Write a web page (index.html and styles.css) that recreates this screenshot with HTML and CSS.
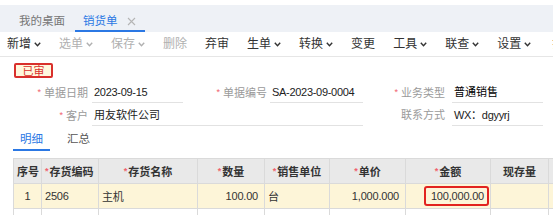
FILE: index.html
```html
<!DOCTYPE html>
<html lang="zh-CN">
<head>
<meta charset="utf-8">
<title>销货单</title>
<link rel="stylesheet" href="styles.css">
</head>
<body>
<div class="page">
  <div class="tabbar">
    <div class="tab">我的桌面</div>
    <div class="tab active">销货单<svg class="close" width="9" height="9" viewBox="0 0 9 9"><path d="M1 1L8 8M8 1L1 8" stroke="#b5b5b5" stroke-width="1.1" fill="none"/></svg></div>
  </div>
  <div class="toolbar">
    <span class="tb">新增<svg class="chev" width="7" height="5" viewBox="0 0 7 5"><polyline points="0.8,0.8 3.5,3.8 6.2,0.8" fill="none" stroke="currentColor" stroke-width="1.4"/></svg></span>
    <span class="tb off">选单<svg class="chev" width="7" height="5" viewBox="0 0 7 5"><polyline points="0.8,0.8 3.5,3.8 6.2,0.8" fill="none" stroke="currentColor" stroke-width="1.4"/></svg></span>
    <span class="tb off">保存<svg class="chev" width="7" height="5" viewBox="0 0 7 5"><polyline points="0.8,0.8 3.5,3.8 6.2,0.8" fill="none" stroke="currentColor" stroke-width="1.4"/></svg></span>
    <span class="tb off">删除</span>
    <span class="sep"></span>
    <span class="tb">弃审</span>
    <span class="sep"></span>
    <span class="tb">生单<svg class="chev" width="7" height="5" viewBox="0 0 7 5"><polyline points="0.8,0.8 3.5,3.8 6.2,0.8" fill="none" stroke="currentColor" stroke-width="1.4"/></svg></span>
    <span class="tb">转换<svg class="chev" width="7" height="5" viewBox="0 0 7 5"><polyline points="0.8,0.8 3.5,3.8 6.2,0.8" fill="none" stroke="currentColor" stroke-width="1.4"/></svg></span>
    <span class="sep"></span>
    <span class="tb">变更</span>
    <span class="sep"></span>
    <span class="tb">工具<svg class="chev" width="7" height="5" viewBox="0 0 7 5"><polyline points="0.8,0.8 3.5,3.8 6.2,0.8" fill="none" stroke="currentColor" stroke-width="1.4"/></svg></span>
    <span class="tb">联查<svg class="chev" width="7" height="5" viewBox="0 0 7 5"><polyline points="0.8,0.8 3.5,3.8 6.2,0.8" fill="none" stroke="currentColor" stroke-width="1.4"/></svg></span>
    <span class="tb">设置<svg class="chev" width="7" height="5" viewBox="0 0 7 5"><polyline points="0.8,0.8 3.5,3.8 6.2,0.8" fill="none" stroke="currentColor" stroke-width="1.4"/></svg></span>
    <span class="sep wide"></span>
    <span class="tb">打印</span>
  </div>

  <div class="status"><span class="badge">已审</span></div>

  <div class="form">
    <div class="lab lab1"><i class="req">*</i>单据日期</div>
    <div class="val num">2023-09-15</div>
    <div class="lab lab2"><i class="req">*</i>单据编号</div>
    <div class="val num">SA-2023-09-0004</div>
    <div class="lab lab3"><i class="req">*</i>业务类型</div>
    <div class="val strong">普通销售</div>

    <div class="lab lab1"><i class="req">*</i>客户</div>
    <div class="val span3">用友软件公司</div>
    <div class="lab lab3">联系方式</div>
    <div class="val num">WX：dgyyrj</div>
  </div>

  <div class="subtabs">
    <div class="stab active">明细</div>
    <div class="stab">汇总</div>
  </div>

  <table class="grid">
    <colgroup>
      <col class="w-seq"><col class="w-code"><col class="w-name"><col class="w-qty"><col class="w-unit"><col class="w-price"><col class="w-amt"><col class="w-stock"><col class="w-more">
    </colgroup>
    <thead>
      <tr>
        <th class="left">序号</th>
        <th class="left"><i class="req">*</i>存货编码</th>
        <th><i class="req">*</i>存货名称</th>
        <th><i class="req">*</i>数量</th>
        <th><i class="req">*</i>销售单位</th>
        <th><i class="req">*</i>单价</th>
        <th><i class="req">*</i>金额</th>
        <th>现存量</th>
        <th></th>
      </tr>
    </thead>
    <tbody>
      <tr class="sel">
        <td class="c">1</td>
        <td>2506</td>
        <td>主机</td>
        <td class="r">100.00</td>
        <td>台</td>
        <td class="r">1,000.000</td>
        <td class="r amt"><span class="mark">100,000.00</span></td>
        <td></td>
        <td></td>
      </tr>
      <tr>
        <td class="c faint">2</td>
        <td></td><td></td><td></td><td></td><td></td><td></td><td></td><td></td>
      </tr>
    </tbody>
  </table>
</div>
</body>
</html>
```

FILE: styles.css
```css
* { box-sizing: border-box; }
html, body { margin: 0; padding: 0; background: #fff; }
body {
  width: 553px;
  height: 215px;
  overflow: hidden;
  font-family: "Liberation Sans", "Noto Sans CJK SC", sans-serif;
  font-size: 11px;
  color: #333;
}
.page { width: 553px; }

/* top tab bar */
.tabbar {
  margin-top: 5px;
  height: 27px;
  background: #eef1f6;
  display: flex;
  align-items: flex-end;
  padding-left: 19px;
  gap: 10px;
}
.tab {
  height: 27px;
  padding-top: 8px;
  line-height: 16px;
  font-size: 11.5px;
  color: #777;
  border-bottom: 2px solid transparent;
  display: flex;
  align-items: flex-start;
}
.tab.active {
  color: #2b78e4;
  border-bottom-color: #2b78e4;
  padding: 8px 9px 0 8px;
}
.close { margin-left: 9px; margin-top: 4px; }

/* toolbar */
.toolbar {
  height: 25px;
  border-bottom: 1px solid #e6e6e6;
  display: flex;
  align-items: center;
  padding-left: 7px;
  font-size: 12px;
  color: #333;
  white-space: nowrap;
}
.tb { display: inline-flex; align-items: center; line-height: 24px; }
.tb + .tb { margin-left: 18px; }
.tb.off { color: #b0b0b0; }
.chev { margin-left: 3px; margin-top: 1px; }
.sep { width: 1px; height: 12px; background: #dcdcdc; margin-left: 9px; }
.sep + .tb { margin-left: 9px; }
.sep.wide { margin-left: 11px; }
.sep.wide + .tb { margin-left: 10px; }

/* status badge */
.status { padding: 6px 0 0 14px; height: 21px; }
.badge {
  display: block;
  width: 39px;
  height: 15px;
  border: 2px solid #d9302c;
  border-radius: 2px;
  background: #fff8de;
  color: #d9302c;
  font-size: 11px;
  line-height: 12px;
  text-align: center;
}

/* header form */
.form {
  margin-top: 4px;
  display: grid;
  grid-template-columns: 92px 91px 87px 93px 89px 91px;
  grid-auto-rows: 21px;
  row-gap: 2px;
}
.lab {
  color: #9a9a9a;
  text-align: right;
  line-height: 20px;
  white-space: nowrap;
}
.lab1 { padding-right: 4px; }
.lab2 { padding-right: 3px; }
.lab3 { padding-right: 7px; }
.req {
  font-style: normal;
  color: #f0616d;
  margin-right: 3px;
  font-size: 9px;
  vertical-align: 2px;
}
.val {
  border-bottom: 1px solid #e2e2e2;
  line-height: 20px;
  padding-left: 2px;
  color: #222;
  white-space: nowrap;
}
.num { letter-spacing: -0.3px; }
.strong { color: #000; }
.span3 { grid-column: span 3; }

/* sub tabs */
.subtabs {
  display: flex;
  padding-left: 13px;
  height: 24px;
  margin-top: 1px;
}
.stab {
  padding: 4px 7px 0;
  line-height: 16px;
  font-size: 11.5px;
  color: #555;
  border-bottom: 2px solid transparent;
}
.stab + .stab { margin-left: 10px; }
.stab.active { color: #2b78e4; border-bottom-color: #2b78e4; }

/* grid table */
.grid {
  margin: 7px 0 0 13px;
  border-collapse: collapse;
  table-layout: fixed;
  width: 560px;
}
.w-seq { width: 28px; }
.w-code { width: 57px; }
.w-name { width: 99px; }
.w-qty { width: 67px; }
.w-unit { width: 65px; }
.w-price { width: 76px; }
.w-amt { width: 85px; }
.w-stock { width: 58px; }
.w-more { width: 25px; }
.grid th, .grid td {
  border: 1px solid #dadada;
  height: 25px;
  padding: 0 3px;
  white-space: nowrap;
  overflow: hidden;
}
.grid th {
  background: #e9e9e9;
  font-weight: bold;
  color: #333;
  text-align: center;
}
.grid th .req { margin-right: 1px; }
.grid th.left { text-align: left; }
.grid td { color: #333; letter-spacing: -0.2px; }
.grid tr.sel td { background: #fdf5d8; }
.grid td.c { text-align: center; }
.grid td.r { text-align: right; padding-right: 6px; }
.grid td.amt { padding-right: 1px; }
.grid td.faint { color: #c8c8c8; }
.mark {
  display: inline-block;
  height: 20px;
  line-height: 16px;
  border: 2px solid #e2231f;
  border-radius: 3px;
  padding: 0 3px 0 5px;
  background: #fdf5d8;
}
```
